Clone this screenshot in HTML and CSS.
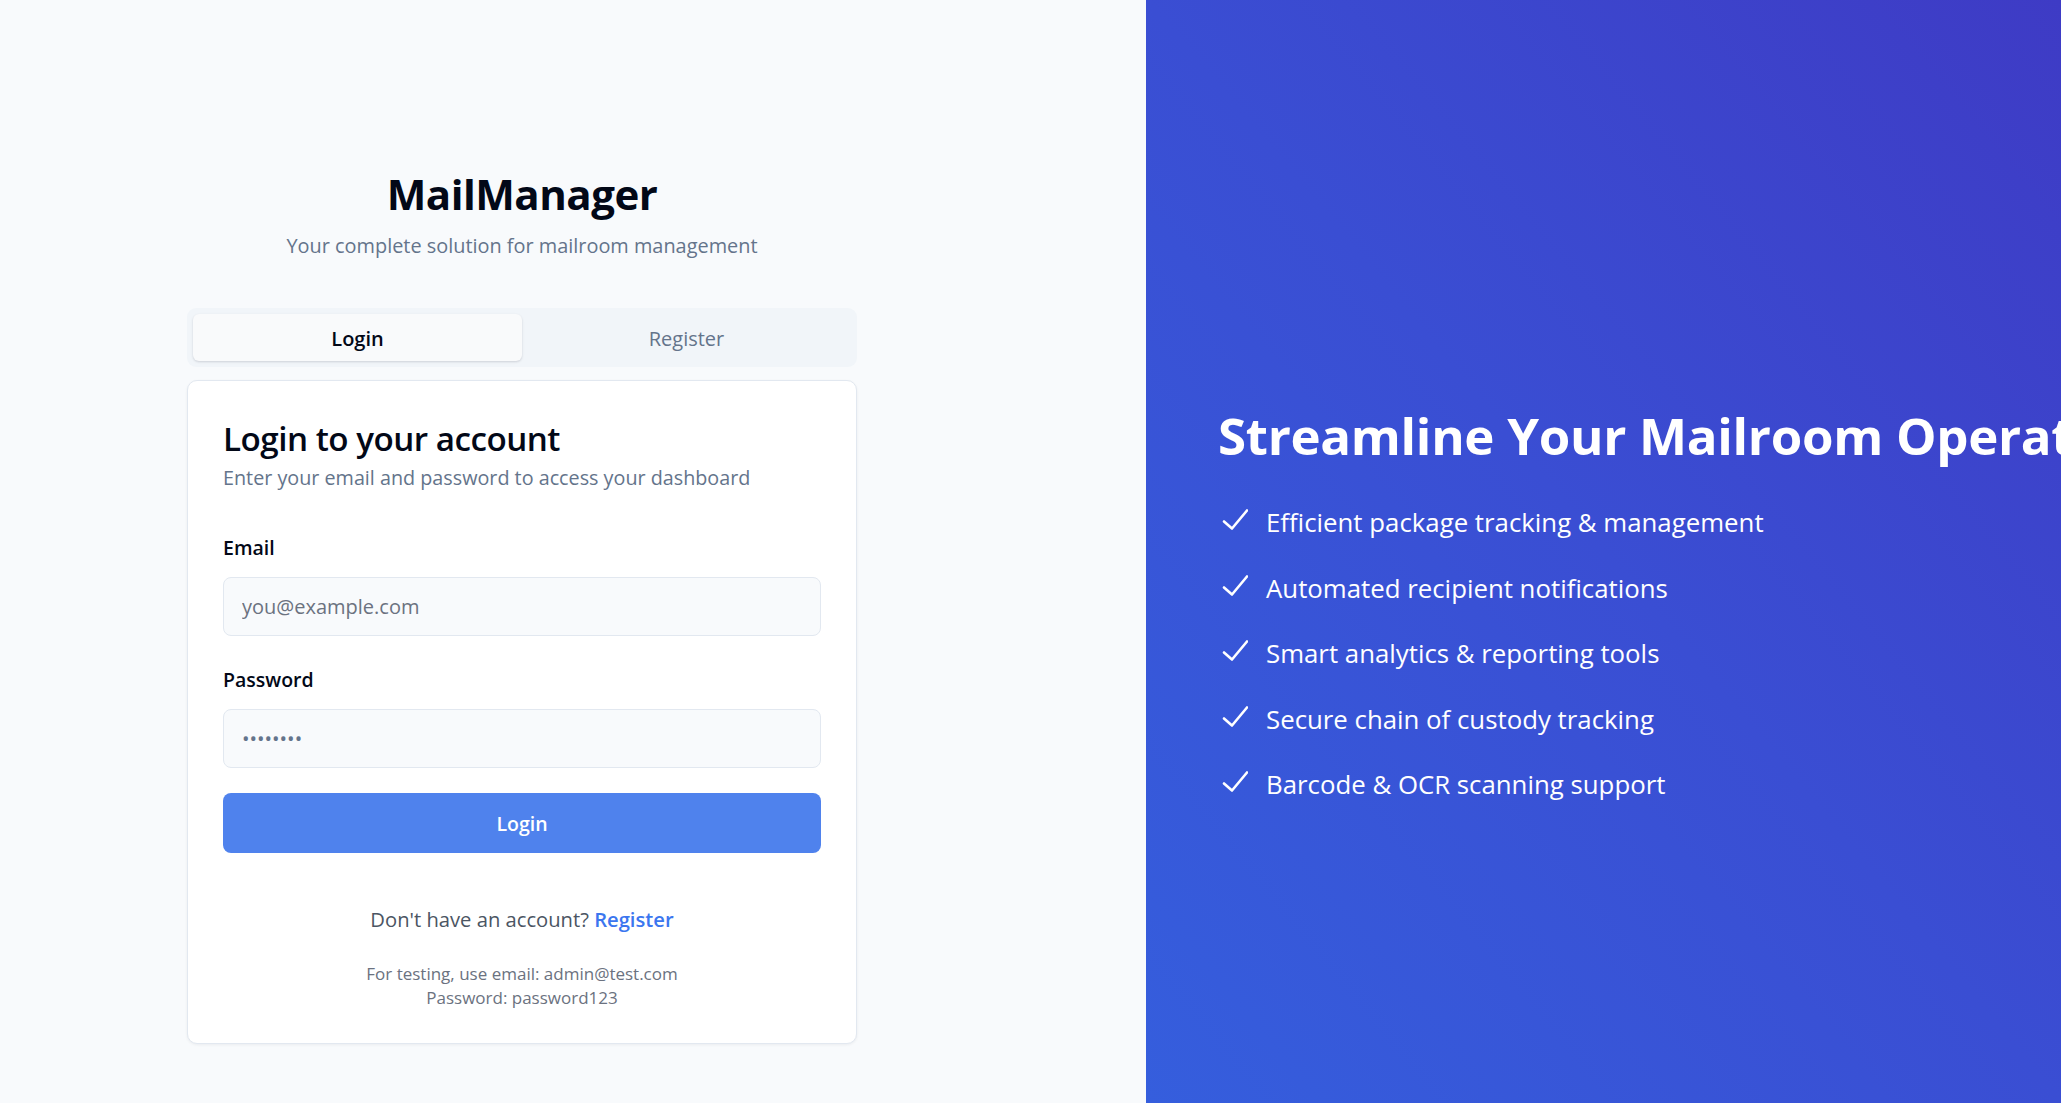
FILE: index.html
```html
<!DOCTYPE html>
<html lang="en">
<head>
<meta charset="utf-8">
<title>MailManager – Login</title>
<link rel="stylesheet" href="styles.css">
</head>
<body>
<div class="page">
  <main class="left">
    <div class="auth">
      <header class="brand">
        <h1 class="brand-title">MailManager</h1>
        <p class="brand-sub">Your complete solution for mailroom management</p>
      </header>

      <div class="tabs">
        <button class="tab tab-active">Login</button>
        <button class="tab">Register</button>
      </div>

      <section class="card">
        <h2 class="card-title">Login to your account</h2>
        <p class="card-sub">Enter your email and password to access your dashboard</p>

        <label class="label label-first" for="email">Email</label>
        <input class="input" id="email" type="email" placeholder="you@example.com">

        <label class="label" for="password">Password</label>
        <input class="input" id="password" type="password" value="password">

        <button class="btn">Login</button>

        <p class="switch">Don't have an account? <a class="link" href="#">Register</a></p>

        <p class="hint">For testing, use email: admin@test.com<br>Password: password123</p>
      </section>
    </div>
  </main>

  <aside class="right">
    <h2 class="hero-title">Streamline Your Mailroom Operations</h2>
    <ul class="features">
      <li class="feature"><svg class="check" viewBox="0 0 26 24" width="26" height="24"><polyline points="2,13.5 10,20.5 25,2.5" fill="none" stroke="#fff" stroke-width="2.6" stroke-linecap="round" stroke-linejoin="round"/></svg><span>Efficient package tracking &amp; management</span></li>
      <li class="feature"><svg class="check" viewBox="0 0 26 24" width="26" height="24"><polyline points="2,13.5 10,20.5 25,2.5" fill="none" stroke="#fff" stroke-width="2.6" stroke-linecap="round" stroke-linejoin="round"/></svg><span>Automated recipient notifications</span></li>
      <li class="feature"><svg class="check" viewBox="0 0 26 24" width="26" height="24"><polyline points="2,13.5 10,20.5 25,2.5" fill="none" stroke="#fff" stroke-width="2.6" stroke-linecap="round" stroke-linejoin="round"/></svg><span>Smart analytics &amp; reporting tools</span></li>
      <li class="feature"><svg class="check" viewBox="0 0 26 24" width="26" height="24"><polyline points="2,13.5 10,20.5 25,2.5" fill="none" stroke="#fff" stroke-width="2.6" stroke-linecap="round" stroke-linejoin="round"/></svg><span>Secure chain of custody tracking</span></li>
      <li class="feature"><svg class="check" viewBox="0 0 26 24" width="26" height="24"><polyline points="2,13.5 10,20.5 25,2.5" fill="none" stroke="#fff" stroke-width="2.6" stroke-linecap="round" stroke-linejoin="round"/></svg><span>Barcode &amp; OCR scanning support</span></li>
    </ul>
  </aside>
</div>
</body>
</html>
```

FILE: styles.css
```css
* { box-sizing: border-box; }

html, body {
  margin: 0;
  padding: 0;
  height: 100%;
}

body {
  font-family: "Open Sans", "Noto Sans", "Liberation Sans", sans-serif;
  color: #020817;
  background: #f8fafc;
  overflow: hidden;
}

.page {
  display: flex;
  height: 1103px;
}

/* ---------- Left ---------- */
.left {
  width: 1146px;
  flex: 0 0 1146px;
  background: #f8fafc;
  display: flex;
  justify-content: center;
  padding-right: 102px;
  padding-top: 164px;
}

.auth {
  width: 670px;
  display: flex;
  flex-direction: column;
}

.brand {
  text-align: center;
}

.brand-title {
  margin: 0;
  font-size: 42px;
  line-height: 60px;
  font-weight: 700;
  color: #020817;
  letter-spacing: -0.5px;
}

.brand-sub {
  margin: 7px 0 0;
  font-size: 19.9px;
  line-height: 30px;
  color: #64748b;
}

.tabs {
  margin-top: 47px;
  display: flex;
  background: #f1f5f9;
  border-radius: 9px;
  padding: 6px;
  height: 59px;
}

.tab {
  flex: 1;
  border: 0;
  background: transparent;
  font-family: inherit;
  font-size: 20px;
  font-weight: 500;
  color: #64748b;
  border-radius: 6px;
  padding-top: 2px;
  cursor: pointer;
}

.tab-active {
  background: #f9fafb;
  color: #020817;
  font-weight: 600;
  box-shadow: 0 1px 3px rgba(15, 23, 42, 0.10), 0 1px 2px rgba(15, 23, 42, 0.06);
}

.card {
  margin-top: 13px;
  background: #ffffff;
  border: 1px solid #e2e8f0;
  border-radius: 10px;
  box-shadow: 0 1px 3px rgba(15, 23, 42, 0.06);
  padding: 35px 35px 33px;
  display: flex;
  flex-direction: column;
}

.card-title {
  margin: 0;
  font-size: 33.2px;
  line-height: 45px;
  font-weight: 600;
  color: #020817;
  letter-spacing: -0.5px;
}

.card-sub {
  margin: 2px 0 0;
  font-size: 19.75px;
  line-height: 30px;
  color: #64748b;
}

.label {
  display: block;
  margin-top: 29px;
  font-size: 19.5px;
  line-height: 30px;
  font-weight: 600;
  color: #020817;
}

.label-first {
  margin-top: 40px;
}

.input {
  margin-top: 14px;
  height: 59px;
  width: 100%;
  background: #f8fafc;
  border: 1px solid #e2e8f0;
  border-radius: 8px;
  padding: 0 18px;
  font-family: inherit;
  font-size: 20px;
  color: #64748b;
  outline: none;
}

.input::placeholder {
  color: #6b7280;
}

.btn {
  margin-top: 25px;
  height: 60px;
  width: 100%;
  border: 0;
  border-radius: 8px;
  background: #4f82ed;
  color: #ffffff;
  font-family: inherit;
  font-size: 19.5px;
  font-weight: 600;
  cursor: pointer;
}

.switch {
  margin: 51px 0 0;
  text-align: center;
  font-size: 20.2px;
  line-height: 30px;
  color: #4b5563;
}

.link {
  color: #3b76ef;
  font-weight: 600;
  text-decoration: none;
}

.hint {
  margin: 28px 0 0;
  text-align: center;
  font-size: 17px;
  line-height: 24px;
  color: #6b7280;
}

/* ---------- Right ---------- */
.right {
  flex: 1;
  min-width: 0;
  overflow: hidden;
  background: linear-gradient(to top right, #355edd 0%, #3a4ed3 50%, #3e3bc5 100%);
  color: #ffffff;
  padding-left: 72px;
  padding-top: 399px;
}

.hero-title {
  margin: 0;
  font-size: 51px;
  line-height: 72px;
  font-weight: 700;
  white-space: nowrap;
  letter-spacing: -0.3px;
}

.features {
  list-style: none;
  margin: 35px 0 0;
  padding: 0;
  display: flex;
  flex-direction: column;
  gap: 32.5px;
}

.feature {
  display: flex;
  align-items: flex-start;
  font-size: 25.8px;
  line-height: 33px;
}

.check {
  flex: 0 0 26px;
  margin: 2px 18px 0 4px;
}
```
